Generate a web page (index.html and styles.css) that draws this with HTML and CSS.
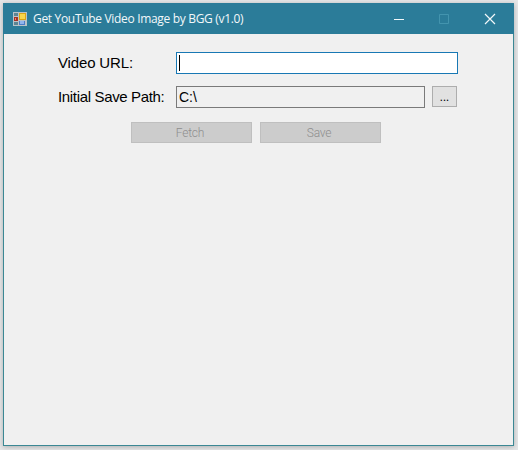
FILE: index.html
```
<!DOCTYPE html>
<html lang="en">
<head>
<meta charset="utf-8">
<title>Get YouTube Video Image by BGG (v1.0)</title>
<link rel="stylesheet" href="styles.css">
</head>
<body>
<main class="window">
  <header class="titlebar">
    <svg class="app-icon" width="14" height="14" viewBox="0 0 14 14" shape-rendering="crispEdges">
      <path fill="#b9c3c8" d="M0 0h14v14H0z"/>
      <path fill="#5b8594" d="M1 1h4v3H1zM1 10h4v3H1z"/>
      <path fill="#a53125" d="M1 5h4v4H1z"/>
      <path fill="#e58b6a" d="M2 6h1v2H2z"/>
      <path fill="#d9a514" d="M6 1h7v7H6z"/>
      <path fill="#f7d64b" d="M7 2h5v5H7z"/>
      <path fill="#4d7dc8" d="M6 9h6v4H6z"/>
      <path fill="#91b5ed" d="M7 9h4v3H7z"/>
    </svg>
    <span class="caption">Get YouTube Video Image by BGG (v1.0)</span>
    <svg class="controls" width="138" height="31" viewBox="0 0 138 31" fill="none">
      <path stroke="#f2f8fa" d="M18 15.5h10"/>
      <path stroke="#4394ae" d="M63.5 10.5h9v9h-9z"/>
      <path stroke="#f2f8fa" stroke-width="1.2" d="M109 10l10 10M119 10l-10 10"/>
    </svg>
  </header>
  <form class="content">
    <div class="row">
      <label class="label">Video URL:</label>
      <div class="field url"><span class="caret"></span></div>
    </div>
    <div class="row path-row">
      <label class="label tight">Initial Save Path:</label>
      <div class="field path">C:\</div>
      <button class="button browse" type="button">...</button>
    </div>
    <div class="actions">
      <button class="button action" type="button" disabled>Fetch</button>
      <button class="button action" type="button" disabled>Save</button>
    </div>
  </form>
</main>
</body>
</html>
```
FILE: styles.css
```
* { box-sizing: border-box; }
body {
  margin: 0;
  height: 450px;
  padding: 3px 4px 4px 3px;
  background: #e6e7e8;
  overflow: hidden;
}
.window {
  width: 511px;
  height: 443px;
  border: 1px solid #3b8894;
  border-top-color: #2b7c99;
  background: #f0f0f0;
  box-shadow: 0 1px 5px rgba(0, 0, 0, .25);
}
.titlebar {
  display: flex;
  align-items: center;
  height: 30px;
  margin: 0 -1px;
  padding-left: 10px;
  background: #2b7c99;
}
.app-icon { flex: none; margin-right: 6px; }
.caption {
  flex: 1;
  font: 12px/16px "Open Sans", sans-serif;
  letter-spacing: -.32px;
  color: #f2f8fa;
  white-space: nowrap;
}
.controls { flex: none; }
.content { padding: 18px 0 0 53px; }
.row { display: flex; height: 22px; }
.path-row { margin-top: 12px; }
.label {
  width: 119px;
  padding-left: 1px;
  font: 15px/22px "Liberation Sans", Arial, sans-serif;
  letter-spacing: -.15px;
  color: #000;
  white-space: nowrap;
}
.tight { letter-spacing: -.34px; }
.field {
  height: 22px;
  font: 14px/20px "Liberation Sans", Arial, sans-serif;
  color: #000;
}
.url {
  width: 282px;
  padding: 2px;
  border: 1px solid #1878b4;
  background: #fff;
}
.caret { display: block; width: 1px; height: 16px; background: #000; }
.path {
  width: 249px;
  padding-left: 2px;
  border: 1px solid #7a7a7a;
}
.button {
  margin: 0;
  padding: 0;
  border: 1px solid #adadad;
  background: #e1e1e1;
  font: 12px/18px Roboto, sans-serif;
  color: #000;
}
.browse { width: 25px; height: 21px; margin-left: 7px; }
.actions { display: flex; gap: 8px; margin: 14px 0 0 74px; }
.action {
  width: 121px;
  height: 21px;
  padding-right: 3px;
  border-color: #bfbfbf;
  background: #ccc;
  font-weight: 300;
  letter-spacing: -.2px;
  color: #8e8e8e;
}
```
